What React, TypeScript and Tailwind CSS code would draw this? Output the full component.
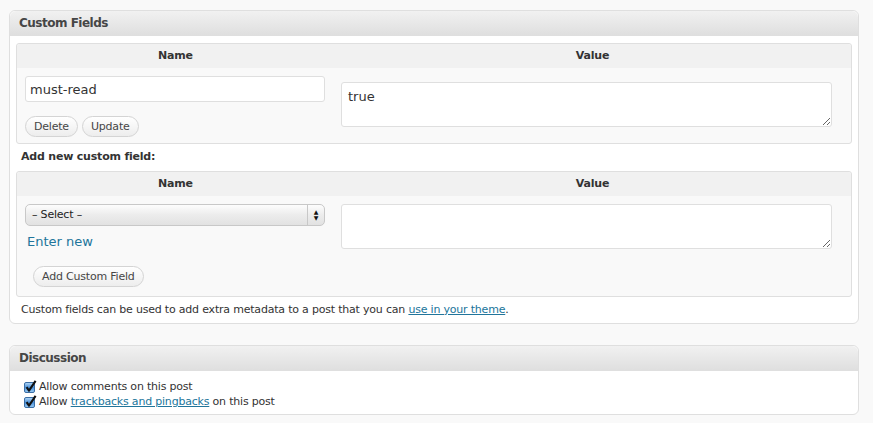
import type { ReactNode } from "react";

const font = { fontFamily: '"DejaVu Sans", "Lucida Grande", Verdana, sans-serif' };

function PillButton({ children }: { children: ReactNode }) {
  return (
    <button className="h-[21px] rounded-full border border-[#d4d4d4] bg-gradient-to-b from-white to-[#ededed] px-[8px] text-[11px] leading-none tracking-[-0.2px] text-[#464646]">
      {children}
    </button>
  );
}

// mac style checked box
function CheckBox() {
  return (
    <svg width="13" height="13" viewBox="0 0 13 13" className="shrink-0">
      <defs>
        <linearGradient id="cb" x1="0" y1="0" x2="0" y2="1">
          <stop offset="0" stopColor="#b8dbf8" />
          <stop offset="0.5" stopColor="#4a90d9" />
          <stop offset="1" stopColor="#9ccdf5" />
        </linearGradient>
      </defs>
      <rect x="0.5" y="2.5" width="10" height="10" rx="1.5" fill="url(#cb)" stroke="#3b6ea5" />
      <path d="M2.6 7.2 L5 10.6 L11.6 0.8" fill="none" stroke="#111" strokeWidth="2.1" strokeLinejoin="round" />
    </svg>
  );
}

function Textarea({ value = "" }: { value?: string }) {
  return (
    <textarea
      defaultValue={value}
      className="block h-[45px] w-[491px] resize-y rounded-[3px] border border-[#dfdfdf] bg-white px-[6px] py-[4px] text-[13px] text-[#333] outline-none"
    />
  );
}

function TableHead() {
  return (
    <div className="flex h-[24px] items-center rounded-t-[3px] bg-[#f1f1f1] text-[11px] font-bold tracking-[-0.2px] text-[#333]">
      <div className="w-[317px] text-center">Name</div>
      <div className="flex-1 text-center">Value</div>
    </div>
  );
}

function BoxHeader({ title }: { title: string }) {
  return (
    <div className="flex h-[25px] items-center rounded-t-[6px] border-b border-[#dfdfdf] bg-gradient-to-b from-[#f1f1f1] to-[#dfdfdf] px-[9px] text-[12px] font-bold tracking-[-0.5px] text-[#464646]">
      {title}
    </div>
  );
}

export default function App() {
  return (
    <div style={font} className="h-[423px] w-[873px] bg-[#f9f9f9] pl-[9px] pt-[10px] text-[#333]">
      {/* custom fields box */}
      <div className="w-[850px] rounded-[6px] border border-[#dfdfdf] bg-white">
        <BoxHeader title="Custom Fields" />
        <div className="px-[6px] pt-[7px]">
          <div className="rounded-[3px] border border-[#dfdfdf] bg-[#f9f9f9]">
            <TableHead />
            <div className="flex pb-[6px]">
              <div className="w-[317px] pl-[8px] pt-[8px]">
                <input
                  defaultValue="must-read"
                  className="block h-[26px] w-[300px] rounded-[3px] border border-[#dfdfdf] bg-white px-[4px] text-[13px] text-[#333] outline-none"
                />
                <div className="mt-[14px] flex gap-[4px]">
                  <PillButton>Delete</PillButton>
                  <PillButton>Update</PillButton>
                </div>
              </div>
              <div className="flex-1 pl-[7px] pt-[14px]">
                <Textarea value="true" />
              </div>
            </div>
          </div>

          <div className="flex h-[27px] items-center pl-[5px] text-[11px] font-bold tracking-[-0.2px] text-[#333]">
            Add new custom field:
          </div>

          <div className="rounded-[3px] border border-[#dfdfdf] bg-[#f9f9f9]">
            <TableHead />
            <div className="flex pb-[9px]">
              <div className="w-[317px] pl-[8px] pt-[8px]">
                <div className="flex h-[22px] w-[300px] items-center rounded-[5px] border border-[#c8c8c8] bg-gradient-to-b from-[#fdfdfd] via-[#ececec] to-[#e2e2e2] text-[11px] tracking-[-0.2px] text-[#222]">
                  <span className="flex-1 pl-[6px]">– Select –</span>
                  <span className="flex h-full w-[17px] flex-col items-center justify-center border-l border-[#c8c8c8] text-[6px] leading-[6px] text-[#111]">
                    <span>▲</span>
                    <span>▼</span>
                  </span>
                </div>
                <a className="mt-[8px] block pl-[2px] text-[13px] leading-[16px] text-[#21759b]">Enter new</a>
                <div className="mt-[16px] flex pl-[8px]">
                  <PillButton>Add Custom Field</PillButton>
                </div>
              </div>
              <div className="flex-1 pl-[7px] pt-[8px]">
                <Textarea />
              </div>
            </div>
          </div>

          <p className="flex h-[26px] items-center pl-[5px] text-[11px] tracking-[-0.2px] text-[#333]">
            <span>
              Custom fields can be used to add extra metadata to a post that you can{" "}
              <a className="text-[#21759b] underline">use in your theme</a>.
            </span>
          </p>
        </div>
      </div>

      {/* discussion box */}
      <div className="mt-[21px] w-[850px] rounded-[6px] border border-[#dfdfdf] bg-white">
        <BoxHeader title="Discussion" />
        <div className="px-[14px] pb-[5px] pt-[8px] text-[11px] leading-[15px] tracking-[-0.2px] text-[#333]">
          <label className="flex items-center gap-[2px]">
            <CheckBox />
            <span>Allow comments on this post</span>
          </label>
          <label className="flex items-center gap-[2px]">
            <CheckBox />
            <span>
              Allow <a className="text-[#21759b] underline">trackbacks and pingbacks</a> on this post
            </span>
          </label>
        </div>
      </div>
    </div>
  );
}
